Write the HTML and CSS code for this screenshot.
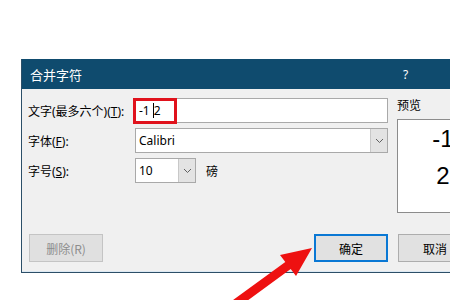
FILE: index.html
```html
<!DOCTYPE html>
<html lang="zh-CN">
<head>
    <meta charset="UTF-8">
    <title>合并字符</title>
    <link rel="stylesheet" href="styles.css">
</head>
<body>
    <div class="page">
        <div class="dialog">
            <div class="titlebar">
                <span class="title">合并字符</span>
                <span class="help">?</span>
            </div>

            <div class="dialog-body">
                <div class="top">
                    <div class="form">
                        <div class="row">
                            <label class="row-label">文字(最多六个)(<u>T</u>):</label>
                            <div class="textbox">
                                <span class="mark"></span>
                                -1&nbsp;<span class="caret"></span>2
                            </div>
                        </div>
                        <div class="row">
                            <label class="row-label">字体(<u>F</u>):</label>
                            <div class="combo combo-wide">
                                <span class="combo-value">Calibri</span>
                                <span class="combo-btn">
                                    <svg width="9" height="6" viewBox="0 0 9 6"><path d="M1 1 L4.5 4.5 L8 1" fill="none" stroke="#606060" stroke-width="1"/></svg>
                                </span>
                            </div>
                        </div>
                        <div class="row">
                            <label class="row-label">字号(<u>S</u>):</label>
                            <div class="combo combo-small">
                                <span class="combo-value">10</span>
                                <span class="combo-btn">
                                    <svg width="9" height="6" viewBox="0 0 9 6"><path d="M1 1 L4.5 4.5 L8 1" fill="none" stroke="#606060" stroke-width="1"/></svg>
                                </span>
                            </div>
                            <span class="unit">磅</span>
                        </div>
                    </div>

                    <div class="preview">
                        <div class="preview-label">预览</div>
                        <div class="preview-box">
                            <div>-1</div>
                            <div>2</div>
                        </div>
                    </div>
                </div>

                <div class="buttons">
                    <button class="btn btn-delete" disabled>删除(R)</button>
                    <button class="btn btn-ok">确定</button>
                    <button class="btn btn-cancel">取消</button>
                </div>
            </div>
        </div>
    </div>

    <!-- red annotation arrow -->
    <svg class="arrow" width="450" height="300" viewBox="0 0 450 300">
        <polygon points="312,248 296,276 290.7,269.1 238.2,307.4 232.8,300.2 285.3,261.9 280,255" fill="#ee1111"/>
    </svg>
</body>
</html>
```

FILE: styles.css
```css
* {
    margin: 0;
    padding: 0;
    box-sizing: border-box;
}

body {
    width: 450px;
    height: 300px;
    overflow: hidden;
    background: #ffffff;
    font-family: "Noto Sans", "Noto Sans CJK SC", sans-serif;
    font-size: 12px;
    color: #000;
    position: relative;
}

.page {
    padding: 59px 0 0 21px;
}

.dialog {
    width: 500px;
    border: 1px solid #2c4f68;
    border-top: none;
}

.titlebar {
    height: 30px;
    background: #0f4b6e;
    color: #fff;
    display: flex;
    align-items: center;
    padding-left: 8px;
}

.title {
    font-family: "Noto Sans CJK SC", sans-serif;
    font-size: 13px;
}

.help {
    margin-left: 321px;
    font-size: 12px;
}

.dialog-body {
    background: #f0f0f0;
    padding: 9px 0 9px 6px;
    border-bottom: 1px solid #dce9f3;
}

.top {
    display: flex;
}

.form {
    width: 360px;
    display: flex;
    flex-direction: column;
    gap: 5px;
}

.row {
    display: flex;
    align-items: center;
    height: 25px;
}

.row-label {
    width: 107px;
    flex-shrink: 0;
}

u {
    text-decoration: underline;
}

.textbox {
    position: relative;
    width: 253px;
    height: 25px;
    background: #fff;
    border: 1px solid #a9a9a9;
    padding-left: 3px;
    display: flex;
    align-items: center;
}

.mark {
    position: absolute;
    left: -3px;
    top: -1px;
    width: 44px;
    height: 26px;
    border: 3px solid #e0121c;
}

.caret {
    display: inline-block;
    width: 1px;
    height: 15px;
    background: #000;
}

.combo {
    height: 25px;
    background: #fff;
    border: 1px solid #a9a9a9;
    display: flex;
    justify-content: space-between;
    align-items: stretch;
}

.combo-wide {
    width: 253px;
}

.combo-small {
    width: 61px;
}

.combo-value {
    padding-left: 3px;
    display: flex;
    align-items: center;
}

.combo-btn {
    width: 17px;
    background: #e3e3e3;
    border-left: 1px solid #c8c8c8;
    display: flex;
    align-items: center;
    justify-content: center;
}

.unit {
    margin-left: 10px;
}

.preview {
    margin-left: 9px;
}

.preview-label {
    height: 21px;
    line-height: 16px;
}

.preview-box {
    width: 92px;
    height: 94px;
    background: #fff;
    border: 1px solid #8c8c8c;
    text-align: center;
    font-family: "Liberation Sans", sans-serif;
    font-size: 24px;
    line-height: 37px;
    padding-top: 0;
}

.buttons {
    display: flex;
    margin-top: 21px;
}

.btn {
    width: 74px;
    height: 28px;
    background: #e1e1e1;
    border: 1px solid #adadad;
    font-family: "Noto Sans CJK SC", sans-serif;
    font-size: 12px;
    color: #000;
}

.btn-delete {
    margin-left: 1px;
    color: #8d8d8d;
    background: #e0e0e0;
    border-color: #c4c4c4;
}

.btn-ok {
    margin-left: 211px;
    border: 2px solid #0a78d4;
}

.btn-cancel {
    margin-left: 10px;
}

.arrow {
    position: absolute;
    left: 0;
    top: 0;
}
```
